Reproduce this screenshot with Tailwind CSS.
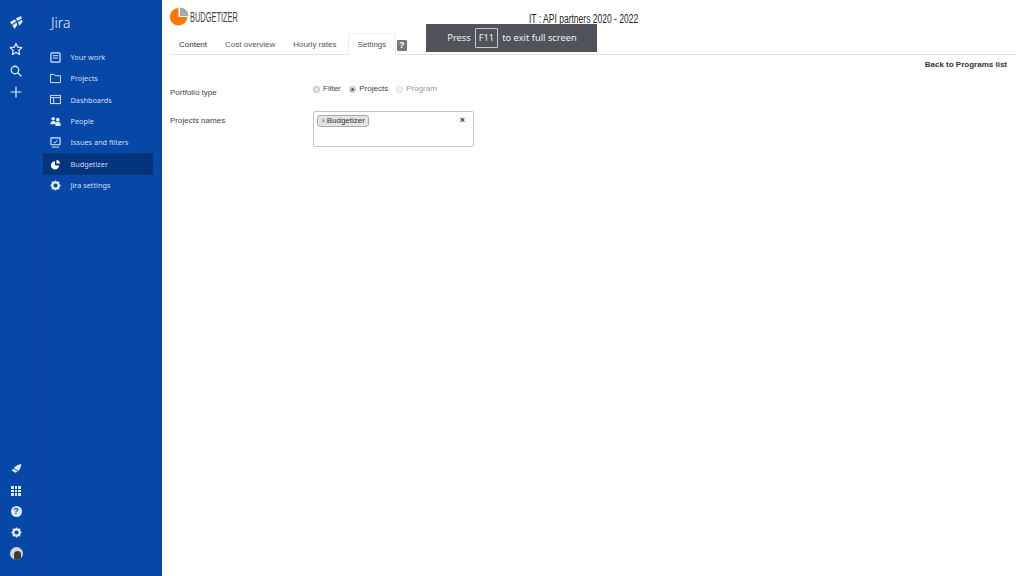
<!DOCTYPE html>
<html lang="en">
<head>
  <meta charset="UTF-8">
  <title>Budgetizer</title>
  <script src="https://cdn.jsdelivr.net/npm/@tailwindcss/browser@4"></script>
</head>
<body class="h-[576px] w-[1024px] overflow-hidden bg-white font-['Liberation_Sans',sans-serif]">
  <div class="flex h-full relative">

    <!-- Global nav -->
    <div class="w-[33px] h-full bg-[#0747a6] border-r border-[#0a429c] flex flex-col items-center justify-between pt-[15px] pb-[16px] text-[#deebff]">
      <div class="flex flex-col items-center gap-[7px]">
        <svg class="w-[15px] h-[15px]" viewBox="0 0 16 16" fill="#deebff"><path d="M1 7.500 6.500 4.500 7.500 7 3 10zM3.500 11 8 8l1 2.500L6 15zM7.500 3.500 13 1l.5 3L8.500 6.500zM9.500 7.500 14 5l.5 2.500-3.500 4z"/></svg>
        <svg class="w-[14px] h-[14px] mt-[5px]" viewBox="0 0 24 24" fill="none" stroke="#deebff" stroke-width="2.200" stroke-linejoin="round"><path d="M12 2.500l3 6.300 6.800.9-5 4.700 1.300 6.800-6.100-3.300-6.100 3.300 1.300-6.800-5-4.700 6.800-.9z"/></svg>
        <svg class="w-[12px] h-[12px] mt-[2px]" viewBox="0 0 24 24" fill="none" stroke="#deebff" stroke-width="2.600" stroke-linecap="round"><circle cx="10" cy="10" r="7.500"/><path d="M16 16l6 6"/></svg>
        <svg class="w-[12px] h-[12px] mt-[2px]" viewBox="0 0 24 24" fill="none" stroke="#deebff" stroke-width="2.400" stroke-linecap="round"><path d="M12 2v20M2 12h20"/></svg>
      </div>
      <div class="flex flex-col items-center gap-[8px]">
        <svg class="w-[11px] h-[11px] -mt-[3px] mb-[3px]" viewBox="0 0 16 16" fill="#deebff"><path d="M15 1.500c-.5 4-1.500 7-4 10L4 7.500C7 4 11 2 15 1.500z"/><path d="M3 8.500 10 12.500 6.500 14 1 11z"/></svg>
        <div class="grid grid-cols-3 gap-[1px] w-[10px] h-[10px] my-[1px]">
          <i class="bg-[#deebff]"></i><i class="bg-[#deebff]"></i><i class="bg-[#deebff]"></i>
          <i class="bg-[#deebff]"></i><i class="bg-[#deebff]"></i><i class="bg-[#deebff]"></i>
          <i class="bg-[#deebff]"></i><i class="bg-[#deebff]"></i><i class="bg-[#deebff]"></i>
        </div>
        <div class="w-[11px] h-[11px] rounded-full bg-[#deebff] text-[#0747a6] text-[9px] leading-[11px] font-bold text-center my-[1px]">?</div>
        <svg class="w-[11px] h-[11px] my-[1px]" viewBox="0 0 24 24" fill="none" stroke="#deebff" stroke-width="5"><circle cx="12" cy="12" r="7"/><path stroke-width="3" d="M12 1v4M12 19v4M1 12h4M19 12h4M4 4l3 3M17 17l3 3M4 20l3-3M17 7l3-3"/></svg>
        <div class="w-[13px] h-[13px] rounded-full bg-[#d8d4cf] overflow-hidden flex justify-center items-end">
          <div class="w-[7px] h-[9px] bg-[#3c3a3a] rounded-t-full ml-[2px]"></div>
        </div>
      </div>
    </div>

    <!-- Project sidebar -->
    <div class="w-[129px] h-full bg-[#0747a6] text-[#cfdff8] font-['Noto_Sans',sans-serif] pl-[10px] pr-[9px]">
      <div class="text-[14px] font-light leading-[20px] pl-[8px] pt-[13px] h-[46.500px] text-[#e6efff]">Jira</div>
      <div class="flex flex-col text-[7.300px]">
        <div class="flex items-center h-[21.400px]">
          <svg class="w-[11px] h-[11px] ml-[7px] mr-[9.500px]" viewBox="0 0 12 12" fill="none" stroke="#deebff" stroke-width="1.300"><rect x="1" y="1" width="10" height="10" rx="1"/><path d="M3 4h6M3 6.500h6" stroke-width="1"/></svg>
          <span>Your work</span>
        </div>
        <div class="flex items-center h-[21.400px]">
          <svg class="w-[11px] h-[11px] ml-[7px] mr-[9.500px]" viewBox="0 0 12 12" fill="none" stroke="#deebff" stroke-width="1"><path d="M.6 10.500V1.500h4l1 1.500h5.800v7.500z"/></svg>
          <span>Projects</span>
        </div>
        <div class="flex items-center h-[21.400px]">
          <svg class="w-[11px] h-[11px] ml-[7px] mr-[9.500px]" viewBox="0 0 12 12" fill="none" stroke="#deebff" stroke-width="1"><rect x=".6" y="1.500" width="10.800" height="9"/><path d="M.6 4h10.800M4 4v6.500"/></svg>
          <span>Dashboards</span>
        </div>
        <div class="flex items-center h-[21.400px]">
          <svg class="w-[11px] h-[11px] ml-[7px] mr-[9.500px]" viewBox="0 0 12 12" fill="#deebff"><circle cx="3.500" cy="3" r="2"/><circle cx="8.500" cy="4" r="2"/><path d="M.5 9c0-2.500 1-3.500 3-3.500s2.500.5 2.500 1.500v2zM6 11V8.500C6 7 7 6.500 8.500 6.500S11.500 7 11.500 8.500V11z"/></svg>
          <span>People</span>
        </div>
        <div class="flex items-center h-[21.400px]">
          <svg class="w-[11px] h-[11px] ml-[7px] mr-[9.500px]" viewBox="0 0 12 12" fill="none" stroke="#deebff" stroke-width="1.200"><rect x="1" y="1" width="10" height="7.500" rx=".5"/><path d="M2 11h8M4 5.500 5.500 6.500 8 3.500" stroke-width="1"/></svg>
          <span>Issues and filters</span>
        </div>
        <div class="flex items-center h-[21.400px] bg-[#04347c]">
          <svg class="w-[11px] h-[11px] ml-[7px] mr-[9.500px]" viewBox="0 0 12 12" fill="#ffffff"><path d="M5.500 2.500v4.500h4.500a4.500 4.500 0 1 1-4.500-4.500z"/><path d="M7 1a4.500 4.500 0 0 1 4 4H7z"/></svg>
          <span>Budgetizer</span>
        </div>
        <div class="flex items-center h-[21.400px]">
          <svg class="w-[11px] h-[11px] ml-[7px] mr-[9.500px]" viewBox="0 0 24 24" fill="none" stroke="#deebff" stroke-width="5"><circle cx="12" cy="12" r="7"/><path stroke-width="3" d="M12 1v4M12 19v4M1 12h4M19 12h4M4 4l3 3M17 17l3 3M4 20l3-3M17 7l3-3"/></svg>
          <span>Jira settings</span>
        </div>
      </div>
    </div>

    <!-- Main -->
    <div class="flex-1 h-full pl-[8px] pr-[8px] text-[#444444]">
      <!-- Header -->
      <div class="flex items-start h-[33px] pt-[7px]">
        <svg class="w-[19px] h-[19px] shrink-0" viewBox="0 0 18 18"><path d="M8 1v8.500h8.500A8.300 8.300 0 1 1 8 1z" fill="#ff7506"/><path d="M9.500 .5a8 8 0 0 1 8 8h-8z" fill="#a8a8a8"/></svg>
        <span class="w-[48px] ml-[1px] mt-[1px] whitespace-nowrap origin-left scale-x-[0.53] text-[#444444] text-[14px] leading-[18px]">BUDGETIZER</span>
        <span class="w-[109px] ml-[291px] mt-[5px] whitespace-nowrap origin-left scale-x-[0.71] text-[12px] leading-[14px] text-[#222222]">IT : API partners 2020 - 2022</span>
      </div>
      <!-- Tabs -->
      <div class="flex items-end h-[22px] border-b border-[#e4e4e4] text-[8px] text-[#555555]">
        <div class="pl-[9px] pr-[9px] h-[21px] leading-[23px] text-[#333333]">Content</div>
        <div class="px-[9px] h-[21px] leading-[23px]">Cost overview</div>
        <div class="px-[9px] h-[21px] leading-[23px]">Hourly rates</div>
        <div class="px-[8.500px] h-[22px] leading-[21px] bg-white border border-b-0 border-[#eeeeee] rounded-t-[2px] -mb-[1px] ml-[2.500px]">Settings</div>
        <div class="ml-[1px] mb-[3px] w-[10px] h-[11px] bg-[#777777] rounded-[1px] text-white text-[9px] leading-[11px] font-bold text-center">?</div>
      </div>
      <!-- Back link -->
      <div class="flex justify-end pt-[5px] h-[29px] text-[8px] font-bold leading-[10px] text-[#333333] pr-[9px]">Back to Programs list</div>
      <!-- Form -->
      <div class="flex items-start h-[27px] text-[8px]">
        <div class="w-[143px] pt-[4px] leading-[10px]">Portfolio type</div>
        <div class="flex items-center gap-[3px] leading-[10px] text-[#444444]">
          <span class="w-[7px] h-[7px] rounded-full bg-[#e6e6e6] border border-[#b5b5b5]"></span><span class="mr-[5.500px]">Filter</span>
          <span class="w-[7px] h-[7px] rounded-full bg-[#e6e6e6] border border-[#b5b5b5] flex items-center justify-center"><i class="w-[3px] h-[3px] rounded-full bg-[#555555]"></i></span><span class="mr-[5px]">Projects</span>
          <span class="w-[7px] h-[7px] rounded-full bg-[#f2f2f2] border border-[#dddddd]"></span><span class="text-[#999999]">Program</span>
        </div>
      </div>
      <div class="flex items-start text-[8px]">
        <div class="w-[143px] pt-[5px] leading-[10px]">Projects names</div>
        <div class="relative w-[161px] h-[36px] border border-[#c4c4c4] rounded-[2px] pt-[3px] pl-[3px]">
          <div class="inline-flex items-center h-[12px] px-[3px] bg-[#e4e4e4] border border-[#aaaaaa] rounded-[3px] leading-[10px] text-[#333333]"><span class="text-[#777777] mr-[1px]">×</span>Budgetizer</div>
          <span class="absolute right-[8px] top-[2px] font-bold text-[9px] leading-[12px] text-[#333333]">×</span>
        </div>
      </div>
    </div>

    <!-- Fullscreen notice -->
    <div class="absolute left-[426px] top-[24px] w-[171px] h-[28px] bg-[#50545a] text-[#f0f0f0] text-[9.300px] font-['Noto_Sans',sans-serif] flex items-center justify-center gap-[4px] pl-[1px]">
      <span>Press</span>
      <span class="border border-[#c8c8c8] rounded-[1px] h-[20px] px-[3px] leading-[18px]">F11</span>
      <span>to exit full screen</span>
    </div>
  </div>
</body>
</html>
